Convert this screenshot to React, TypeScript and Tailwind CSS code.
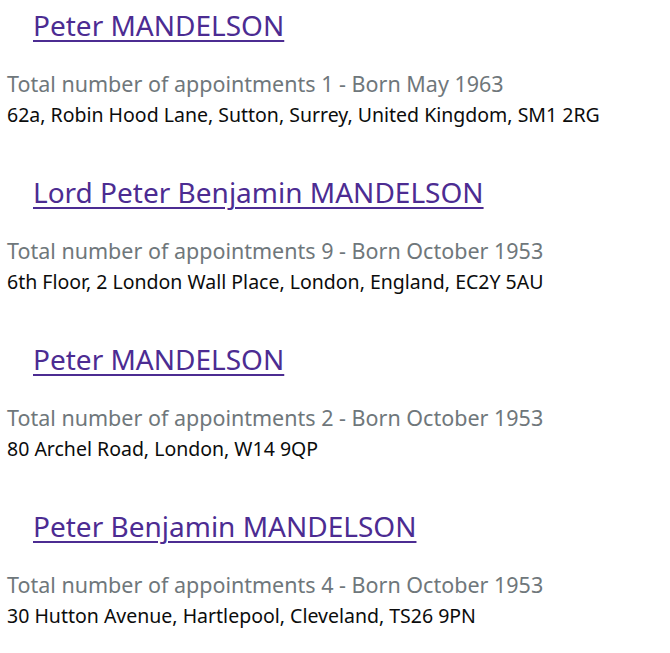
import React from "react";

const items = [
  { name: "Peter MANDELSON", meta: "Total number of appointments 1 - Born May 1963", addr: "62a, Robin Hood Lane, Sutton, Surrey, United Kingdom, SM1 2RG" },
  { name: "Lord Peter Benjamin MANDELSON", meta: "Total number of appointments 9 - Born October 1953", addr: "6th Floor, 2 London Wall Place, London, England, EC2Y 5AU" },
  { name: "Peter MANDELSON", meta: "Total number of appointments 2 - Born October 1953", addr: "80 Archel Road, London, W14 9QP" },
  { name: "Peter Benjamin MANDELSON", meta: "Total number of appointments 4 - Born October 1953", addr: "30 Hutton Avenue, Hartlepool, Cleveland, TS26 9PN" },
];

export default function App() {
  return (
    <div className="w-[670px] h-[653px] bg-white overflow-hidden pl-[7px] pt-[6px]" style={{ fontFamily: '"Noto Sans", sans-serif' }}>
      {items.map((it, i) => (
        <div key={i} className="h-[167px]">
          <div className="pl-[26px] h-[40px] flex items-start">
            <a href="#" className="text-[28px] leading-[38px] text-[#4c2c92] underline decoration-2 underline-offset-[4px]">{it.name}</a>
          </div>
          <div className="mt-[23px] text-[21.5px] leading-[30px] text-[#6f777b]">{it.meta}</div>
          <div className="text-[19.5px] leading-[32px] text-[#0b0c0c]">{it.addr}</div>
        </div>
      ))}
    </div>
  );
}
